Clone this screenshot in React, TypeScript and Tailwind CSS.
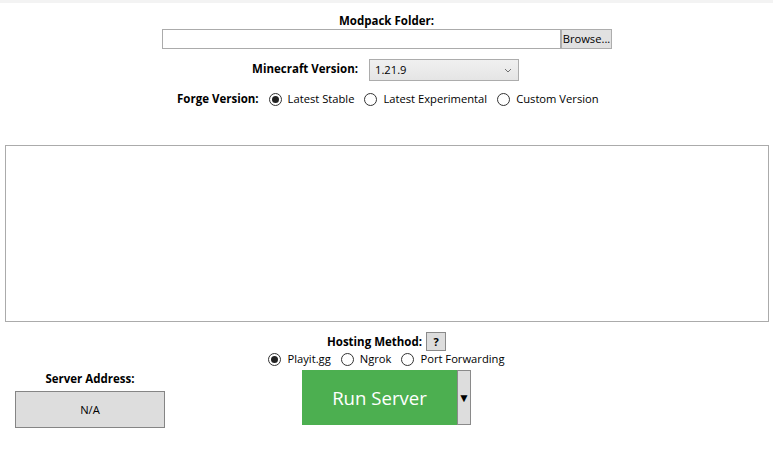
import React from "react";

function Radio({ checked, label }: { checked?: boolean; label: string }) {
  return (
    <div className="flex items-center gap-[6px]">
      <span className="w-[13px] h-[13px] rounded-full border border-[#333333] bg-white flex items-center justify-center">
        {checked && <span className="w-[7px] h-[7px] rounded-full bg-[#222222]" />}
      </span>
      <span>{label}</span>
    </div>
  );
}

export default function App() {
  return (
    <div
      className="w-[773px] h-[452px] bg-white text-black text-[11.2px] leading-[16px] overflow-hidden"
      style={{ fontFamily: '"Open Sans", "Noto Sans", sans-serif' }}
    >
      <div className="h-[3px] bg-[#f3f3f3]" />
      <div className="mt-[10px] text-center font-bold text-[11.5px]">Modpack Folder:</div>
      <div className="flex ml-[162px]">
        <div className="w-[399px] h-[20px] border border-[#ababab] bg-white" />
        <div className="w-[51px] h-[20px] border border-[#adadad] bg-[#e1e1e1] flex items-center justify-center">
          Browse...
        </div>
      </div>
      <div className="flex items-center mt-[10px]">
        <div className="w-[358px] text-right font-bold text-[11.5px] -mt-[3px]">Minecraft Version:</div>
        <div className="ml-[11px] w-[150px] h-[22px] border border-[#acacac] bg-gradient-to-b from-[#f0f0f0] to-[#e5e5e5] flex items-center justify-between px-[5px]">
          <span>1.21.9</span>
          <svg width="8" height="5" viewBox="0 0 8 5" className="mr-[1px]">
            <path d="M1 1 L4 4 L7 1" fill="none" stroke="#707070" strokeWidth="1" />
          </svg>
        </div>
      </div>
      <div className="flex items-center mt-[10px] pl-[177px] h-[16px]">
        <span className="font-bold text-[11.5px] mr-[10px]">Forge Version:</span>
        <div className="flex items-center gap-[10px]">
          <Radio checked label="Latest Stable" />
          <Radio label="Latest Experimental" />
          <Radio label="Custom Version" />
        </div>
      </div>
      <div className="mt-[38px] ml-[5px] w-[764px] h-[177px] border border-[#ababab] bg-white" />
      <div className="grid grid-cols-[1fr_auto_1fr]">
        <div className="mt-[49px] pl-[15px]">
          <div className="w-[150px] text-center font-bold text-[11.5px]">Server Address:</div>
          <div className="mt-[4px] w-[150px] h-[37px] border border-[#858585] bg-[#dddddd] flex items-center justify-center">
            N/A
          </div>
        </div>
        <div className="mt-[10px] flex flex-col items-center">
          <div className="flex items-center gap-[4px] h-[19px]">
            <span className="font-bold text-[11.5px]">Hosting Method:</span>
            <div className="w-[20px] h-[19px] border border-[#8a8a8a] bg-[#dddddd] flex items-center justify-center font-bold text-[11px]">
              ?
            </div>
          </div>
          <div className="flex items-center gap-[10px] h-[16px]">
            <Radio checked label="Playit.gg" />
            <Radio label="Ngrok" />
            <Radio label="Port Forwarding" />
          </div>
          <div className="mt-[3px] flex h-[55px]">
            <div className="w-[155px] bg-[#4caf50] text-white text-[18.6px] flex items-center justify-center">
              Run Server
            </div>
            <div className="w-[14px] bg-[#dddddd] border border-[#8a8a8a] flex items-center justify-center text-[12px]">
              ▼
            </div>
          </div>
        </div>
        <div />
      </div>
    </div>
  );
}
